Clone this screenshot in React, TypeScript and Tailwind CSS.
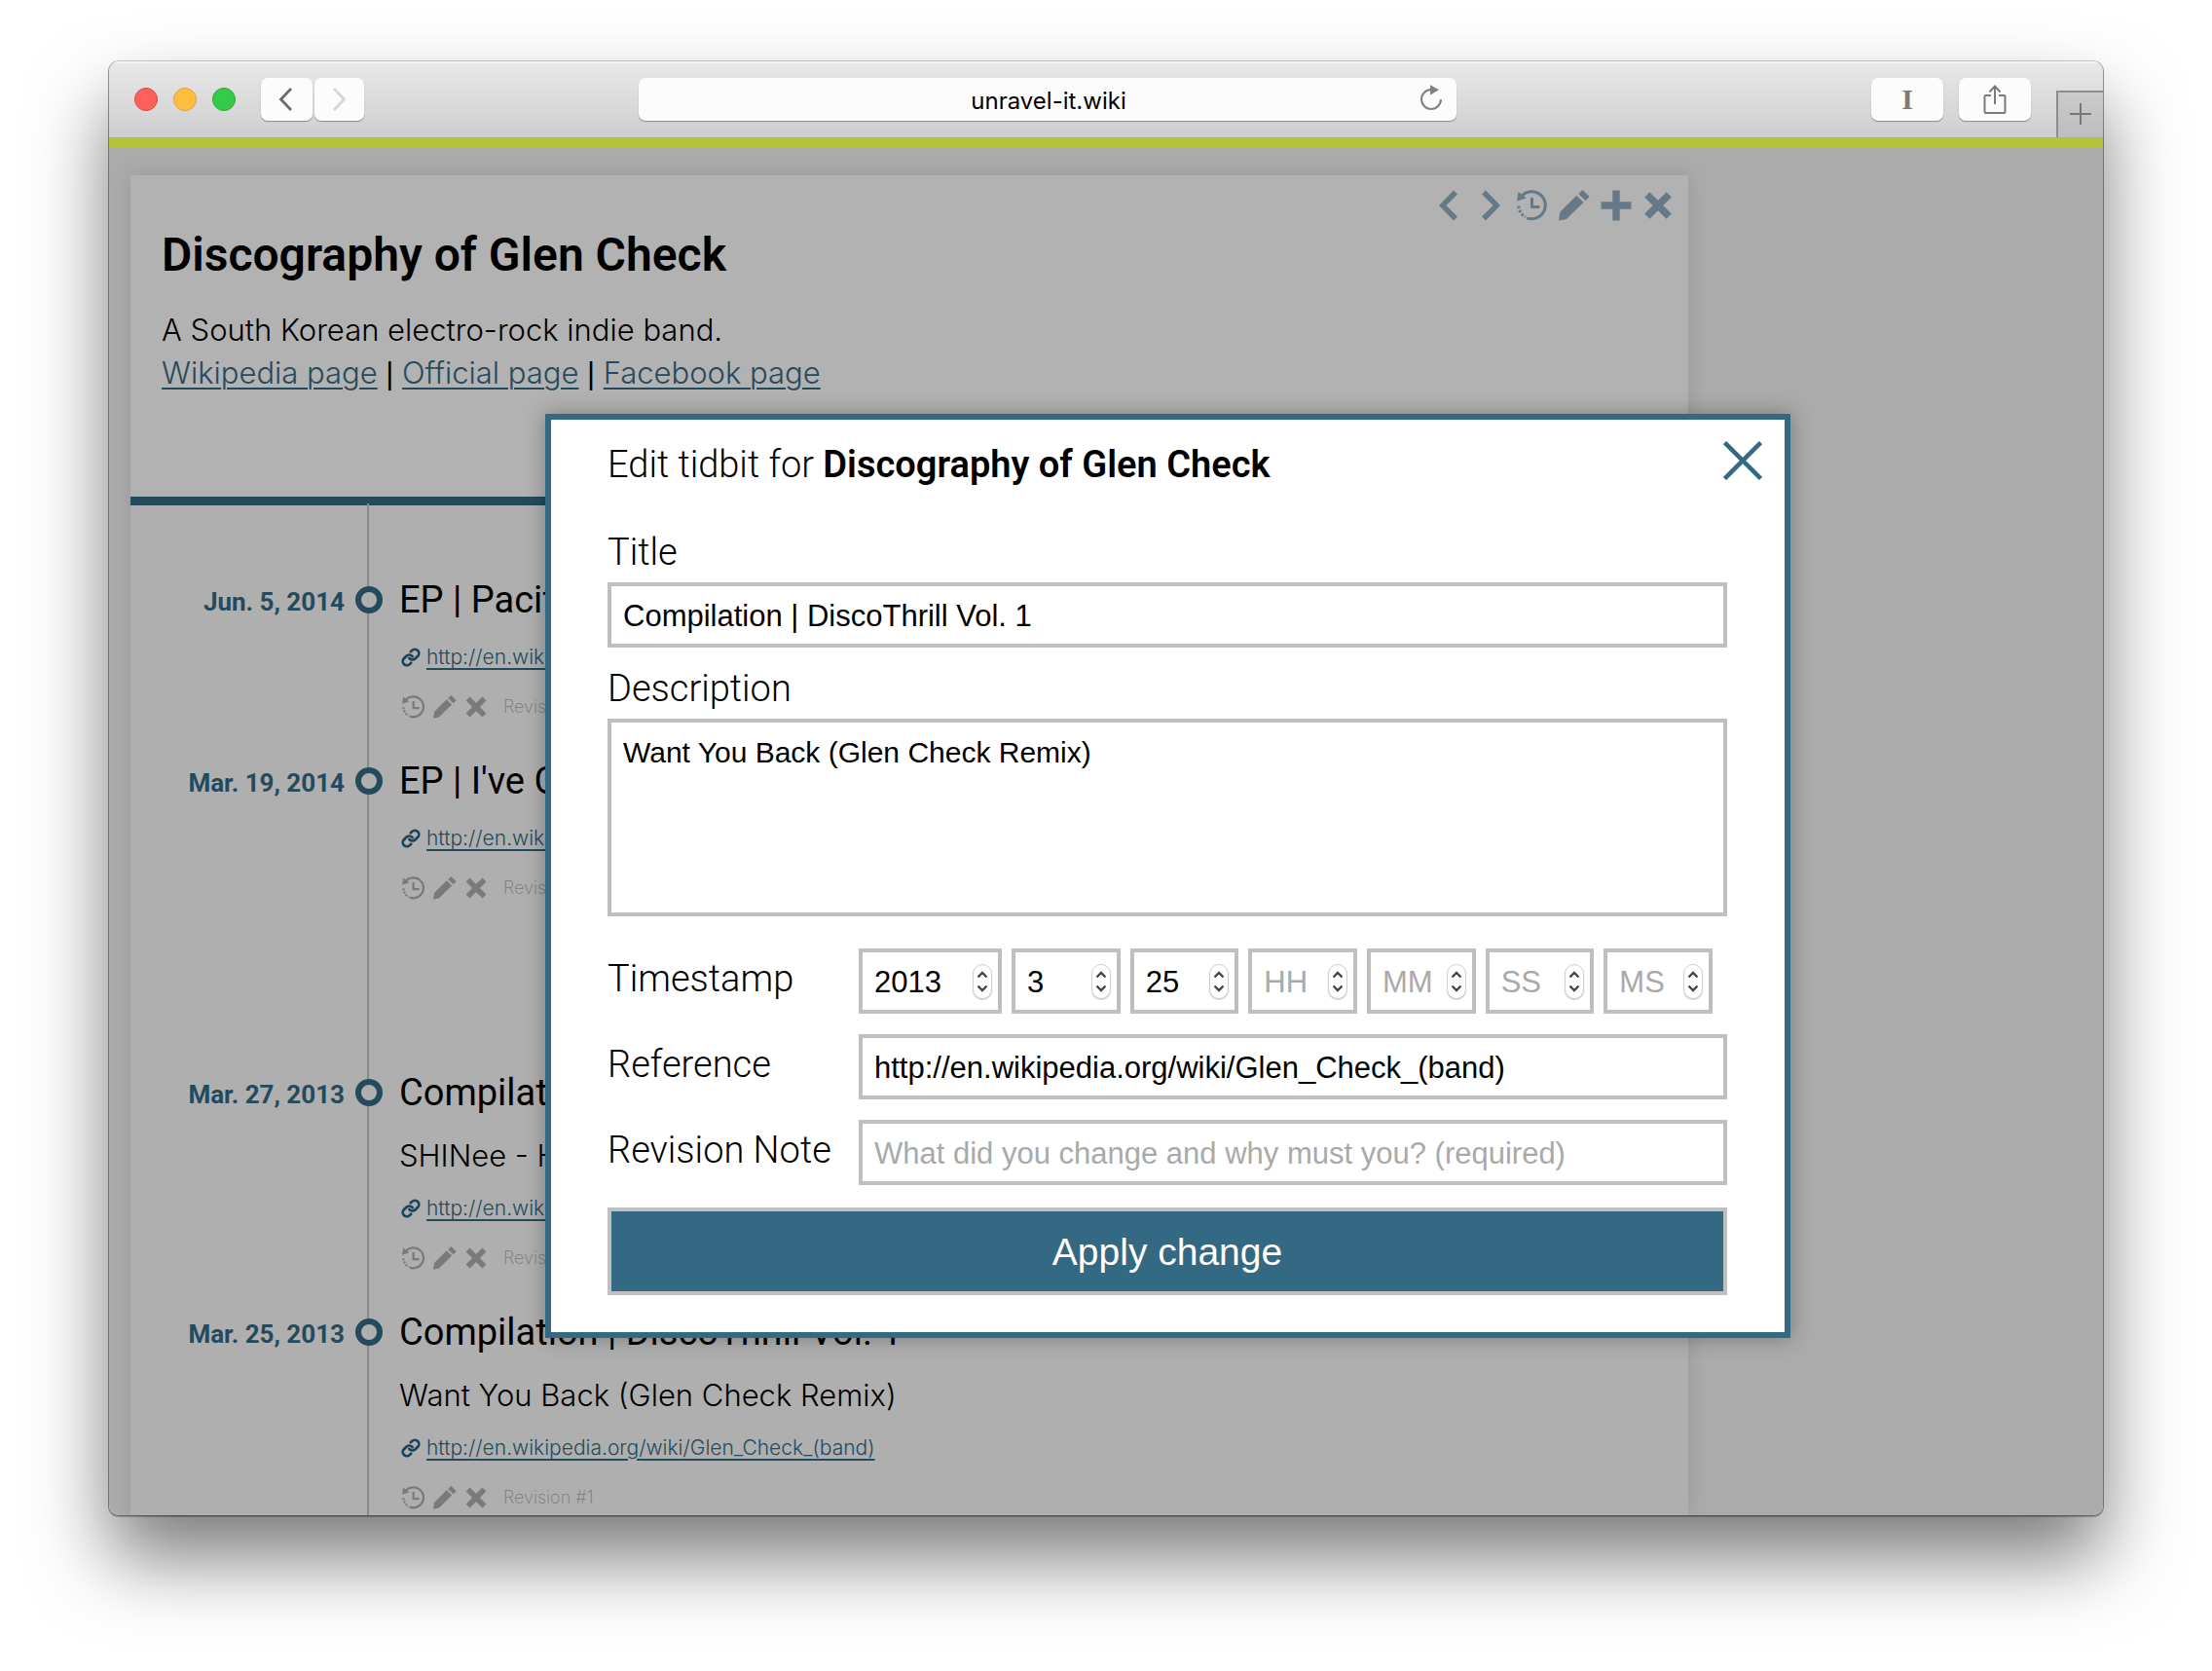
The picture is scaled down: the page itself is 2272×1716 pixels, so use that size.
import { useState, type ReactNode } from "react";
import { Link } from "lucide-react";

const HELVETICA = "font-['Liberation_Sans',Arial,sans-serif]";
const LIGHT = "font-['Inter','Liberation_Sans',sans-serif] font-light";
const WIKI_URL = "http://en.wikipedia.org/wiki/Glen_Check_(band)";

/* ---------- Icons ---------- */

function HistoryIcon({ className }: { className: string }) {
  return (
    <svg viewBox="0 0 32 32" className={className} fill="none" stroke="currentColor" aria-hidden="true">
      <path d="M5.4 5.8A14 14 0 1 1 10.3 28.8" strokeWidth="3" />
      <path d="M1.8 16.4A14 14 0 0 0 9 28" strokeWidth="3" strokeDasharray="2.6 1.8" />
      <path d="M1.5 2L0 11.5L9.8 8.6Z" fill="currentColor" stroke="none" />
      <path d="M15.5 8V17.5H23.5" strokeWidth="3" />
    </svg>
  );
}

function PencilIcon({ className }: { className: string }) {
  return (
    <svg viewBox="0 0 32 32" className={className} fill="currentColor" aria-hidden="true">
      <path d="M0 31.5L1.3 22.7L18.3 5.7L25.5 12.7L7.9 30Z" />
      <path d="M20.3 4.1L24.5 0L31.6 7L27.4 11Z" />
    </svg>
  );
}

function CrossIcon({ className }: { className: string }) {
  return (
    <svg viewBox="0 0 32 32" className={className} stroke="currentColor" strokeWidth="7.5" aria-hidden="true">
      <path d="M4.8 4.8L27.2 27.2M27.2 4.8L4.8 27.2" />
    </svg>
  );
}

function PlusIcon({ className }: { className: string }) {
  return (
    <svg viewBox="0 0 32 32" className={className} stroke="currentColor" strokeWidth="7.4" aria-hidden="true">
      <path d="M0.5 16H31.5M16 0.5V31.5" />
    </svg>
  );
}

function AngleIcon({ className }: { className: string }) {
  return (
    <svg viewBox="0 0 32 32" className={className} fill="currentColor" aria-hidden="true">
      <path d="M6 16L21 0.5L25 4.5L13.4 16L25 27.5L21 31.5Z" />
    </svg>
  );
}

function IconButton({ label, children }: { label: string; children: ReactNode }) {
  return (
    <button type="button" aria-label={label} className="block">
      {children}
    </button>
  );
}

/* ---------- Browser chrome ---------- */

const chromeButton =
  "flex h-11 items-center justify-center rounded-[7px] bg-[#fcfcfc] text-[#7a7a7a] shadow-[0_1px_1px_rgba(0,0,0,0.35)]";

function Toolbar() {
  return (
    <header className="flex h-[79px] shrink-0 items-center border-b border-[#a9a9a9] bg-linear-to-b from-[#e9e9e9] to-[#cecece] shadow-[inset_0_2px_0_#f3f3f3]">
      <div className="flex w-[544px] shrink-0 items-center pl-[26px]">
        <div className="flex gap-4">
          <button type="button" aria-label="Close window" className="size-6 rounded-full border border-[#e0443e] bg-[#fd615c]" />
          <button type="button" aria-label="Minimize window" className="size-6 rounded-full border border-[#dea034] bg-[#fdbd40]" />
          <button type="button" aria-label="Zoom window" className="size-6 rounded-full border border-[#27aa35] bg-[#34ca4a]" />
        </div>
        <div className="ml-[26px] flex gap-[2px]">
          <button type="button" aria-label="Back" className={`${chromeButton} w-[53px] pr-1`}>
            <svg viewBox="0 0 14 24" className="h-6 w-[14px]" fill="none" stroke="#6b6b6b" strokeWidth="2.8">
              <path d="M13 1L2.5 12L13 23" />
            </svg>
          </button>
          <button type="button" aria-label="Forward" className={`${chromeButton} w-[51px]`}>
            <svg viewBox="0 0 14 24" className="h-6 w-[14px]" fill="none" stroke="#d6d6d6" strokeWidth="2.8">
              <path d="M1 1L11.5 12L1 23" />
            </svg>
          </button>
        </div>
      </div>

      <div className="relative min-w-0 flex-1">
        <input
          aria-label="Address"
          defaultValue="unravel-it.wiki"
          className="block h-11 w-full rounded-[7px] bg-[#fcfcfc] pt-0.5 pl-0.5 text-center font-['Inter',sans-serif] text-2xl text-black shadow-[0_1px_1px_rgba(0,0,0,0.35)] outline-none"
        />
        <button type="button" aria-label="Reload" className="absolute top-1.5 right-3">
          <svg viewBox="0 0 28 32" className="h-8 w-7" fill="none" stroke="#808080" strokeWidth="2">
            <path d="M24 16A10 10 0 1 1 14 6" />
            <path d="M13 1.2L22 6.2L13 11.4Z" fill="#808080" stroke="none" />
          </svg>
        </button>
      </div>

      <div className="flex w-[664px] shrink-0 items-center justify-end self-stretch">
        <button type="button" aria-label="Text tool" className={`${chromeButton} w-[74px] pb-0.5 font-['Liberation_Serif',serif] text-[30px] font-bold`}>
          I
        </button>
        <button type="button" aria-label="Share" className={`${chromeButton} ml-4 w-[74px]`}>
          <svg viewBox="0 0 24 32" className="h-8 w-6" fill="none" stroke="currentColor" strokeWidth="2">
            <path d="M8 12H2.5Q1.5 12 1.5 13V29Q1.5 30 2.5 30H21.5Q22.5 30 22.5 29V13Q22.5 12 21.5 12H16" />
            <path d="M12 21V3M6.5 8.5L12 2.5L17.5 8.5" />
          </svg>
        </button>
        <button
          type="button"
          aria-label="New tab"
          className="ml-[26px] flex h-12 w-12 items-center justify-center self-end border-t-2 border-l-2 border-[#8d8d8d] bg-linear-to-b from-[#cbcbcb] to-[#bdbdbd] pb-0.5"
        >
          <svg viewBox="0 0 22 22" className="size-[22px]" stroke="#777" strokeWidth="2">
            <path d="M0 11H22M11 0V22" />
          </svg>
        </button>
      </div>
    </header>
  );
}

/* ---------- Wiki page ---------- */

type Entry = { date: string; title: string; text?: string; lateGap?: boolean };

const entries: Entry[] = [
  { date: "Jun. 5, 2014", title: "EP | Pacific" },
  { date: "Mar. 19, 2014", title: "EP | I've Got This Feeling" },
  { date: "Mar. 27, 2013", title: "Compilation | The Misconceptions", text: "SHINee - Hitchhiking", lateGap: true },
  { date: "Mar. 25, 2013", title: "Compilation | DiscoThrill Vol. 1", text: "Want You Back (Glen Check Remix)" },
];

function TimelineEntry({ entry }: { entry: Entry }) {
  return (
    <li className={`flex items-start ${entry.lateGap ? "mt-[134px]" : ""}`}>
      <time className="w-[220px] shrink-0 text-right text-[26px] leading-[50px] font-bold text-[#366b85]">{entry.date}</time>
      <span className="mt-[9px] ml-[11px] size-7 shrink-0 rounded-full border-6 border-[#366b85] bg-[#fbfbfb]" />
      <div className="ml-[17px] min-w-0">
        <h2 className="text-[38px] leading-[46px] whitespace-nowrap text-black">{entry.title}</h2>
        {entry.text && <p className={`${LIGHT} mt-6 text-[31px] leading-9 whitespace-nowrap text-black`}>{entry.text}</p>}
        <div className="mt-5 flex h-8 items-center gap-[6px] pl-0.5 text-[#366b85]">
          <Link className="size-5 text-[#275f7d]" strokeWidth={3.2} aria-hidden="true" />
          <a href={WIKI_URL} className={`${LIGHT} text-[21px] leading-8 underline decoration-2 underline-offset-4`}>
            {WIKI_URL}
          </a>
        </div>
        <div className="mt-5 flex h-[30px] items-center text-[#afafaf]">
          <div className="flex gap-2 pl-[3px]">
            <IconButton label="History"><HistoryIcon className="size-6" /></IconButton>
            <IconButton label="Edit"><PencilIcon className="size-6" /></IconButton>
            <IconButton label="Delete"><CrossIcon className="size-6" /></IconButton>
          </div>
          <span className="ml-4 font-['Inter',sans-serif] text-lg leading-[30px] font-extralight">Revision #1</span>
        </div>
      </div>
    </li>
  );
}

function HeaderLink({ href, children }: { href: string; children: ReactNode }) {
  return (
    <a href={href} className="text-[#366b85] underline decoration-2 underline-offset-4">
      {children}
    </a>
  );
}

function Divider() {
  return <span className={`${HELVETICA} font-normal`}>{" | "}</span>;
}

function WikiPage() {
  return (
    <article className="relative mt-7 ml-[22px] flex w-[1600px] flex-1 flex-col bg-[#fbfbfb] font-['Roboto',sans-serif] shadow-[0_0_20px_rgba(0,0,0,0.12)]">
      <div className="absolute top-[15px] right-[15px] flex gap-[11px] text-[#92aec0]">
        <IconButton label="Previous"><AngleIcon className="size-8" /></IconButton>
        <IconButton label="Next"><AngleIcon className="size-8 rotate-180" /></IconButton>
        <IconButton label="History"><HistoryIcon className="size-8" /></IconButton>
        <IconButton label="Edit"><PencilIcon className="size-8" /></IconButton>
        <IconButton label="Add"><PlusIcon className="size-8" /></IconButton>
        <IconButton label="Delete"><CrossIcon className="size-8" /></IconButton>
      </div>

      <div className="border-b-9 border-[#366b85] bg-white px-8 pt-[54px] pb-[104px]">
        <h1 className="text-5xl leading-[56px] font-semibold text-black">Discography of Glen Check</h1>
        <div className={`${LIGHT} mt-[27px] text-[31px] leading-[44px] text-black`}>
          <p>A South Korean electro-rock indie band.</p>
          <p>
            <HeaderLink href="#wikipedia">Wikipedia page</HeaderLink>
            <Divider />
            <HeaderLink href="#official">Official page</HeaderLink>
            <Divider />
            <HeaderLink href="#facebook">Facebook page</HeaderLink>
          </p>
        </div>
      </div>

      <div className="relative flex-1 pt-[74px]">
        <div className="absolute -top-0.5 bottom-0 left-[243px] w-0.5 bg-[#c5c5c5]" />
        <ol className="relative flex flex-col gap-[38px]">
          {entries.map((entry) => (
            <TimelineEntry key={entry.date} entry={entry} />
          ))}
        </ol>
      </div>
    </article>
  );
}

/* ---------- Modal ---------- */

const field = `${HELVETICA} border-4 border-[#bfbfbf] bg-white text-black outline-none placeholder:text-[#a9a9a9]`;

function NumberField({ label, placeholder, initial, name }: { label: string; placeholder: string; initial: string; name: string }) {
  const [value, setValue] = useState(initial);
  const step = (by: number) => setValue((v) => String((Number(v) || 0) + by));
  return (
    <div className={`${field} flex h-[67px] items-center pr-1.5 pl-3`}>
      <input
        type="number"
        id={name}
        aria-label={label}
        placeholder={placeholder}
        value={value}
        onChange={(e) => setValue(e.target.value)}
        className="w-0 min-w-0 flex-1 [appearance:textfield] pt-0.5 text-[31px] outline-none placeholder:text-[#a9a9a9] [&::-webkit-inner-spin-button]:appearance-none"
      />
      <span className="flex h-9 w-5 shrink-0 flex-col items-center justify-center gap-1.5 rounded-full border border-[#d0d0d0] bg-white shadow-[0_1px_1px_rgba(0,0,0,0.2)]">
        <button type="button" aria-label={`Increase ${label}`} onClick={() => step(1)}>
          <svg viewBox="0 0 12 8" className="h-2 w-3" fill="none" stroke="#444" strokeWidth="2.4">
            <path d="M1.5 6.5L6 2L10.5 6.5" />
          </svg>
        </button>
        <button type="button" aria-label={`Decrease ${label}`} onClick={() => step(-1)}>
          <svg viewBox="0 0 12 8" className="h-2 w-3" fill="none" stroke="#444" strokeWidth="2.4">
            <path d="M1.5 1.5L6 6L10.5 1.5" />
          </svg>
        </button>
      </span>
    </div>
  );
}

const timeParts = [
  { name: "year", label: "Year", placeholder: "YYYY", initial: "2013" },
  { name: "month", label: "Month", placeholder: "MM", initial: "3" },
  { name: "day", label: "Day", placeholder: "DD", initial: "25" },
  { name: "hour", label: "Hour", placeholder: "HH", initial: "" },
  { name: "minute", label: "Minute", placeholder: "MM", initial: "" },
  { name: "second", label: "Second", placeholder: "SS", initial: "" },
  { name: "millisecond", label: "Millisecond", placeholder: "MS", initial: "" },
];

function FormRow({ label, htmlFor, children }: { label: string; htmlFor: string; children: ReactNode }) {
  return (
    <div className="flex items-start">
      <label htmlFor={htmlFor} className="mt-2 block w-[258px] shrink-0">
        {label}
      </label>
      {children}
    </div>
  );
}

const textField = `${field} h-[67px] px-3 pt-0.5 text-[31px] font-normal`;

function EditModal() {
  return (
    <section
      role="dialog"
      aria-labelledby="modal-title"
      className="absolute top-[273px] left-[448px] w-[1279px] border-6 border-[#336982] bg-white pt-[23px] pr-[59px] pb-[38px] pl-[58px] shadow-[0_0_20px_rgba(0,0,0,0.3)]"
    >
      <button type="button" aria-label="Close" className="absolute top-[22px] right-[23px]">
        <svg viewBox="0 0 40 40" className="size-10" stroke="#336982" strokeWidth="4.5">
          <path d="M1.5 1.5L38.5 38.5M38.5 1.5L1.5 38.5" />
        </svg>
      </button>
      <form
        className="font-['Roboto',sans-serif] text-[38px] leading-[46px] font-light text-black"
        onSubmit={(e) => e.preventDefault()}
      >
        <h2 id="modal-title">
          Edit tidbit for <strong className="font-semibold">Discography of Glen Check</strong>
        </h2>

        <label htmlFor="title" className="mt-11 block">Title</label>
        <input id="title" defaultValue="Compilation | DiscoThrill Vol. 1" className={`${textField} mt-2 block w-full`} />

        <label htmlFor="description" className="mt-[19px] block">Description</label>
        <textarea
          id="description"
          defaultValue="Want You Back (Glen Check Remix)"
          className={`${field} mt-2 block h-[203px] w-full resize-none px-3 pt-[13px] text-[30px] leading-9 font-normal`}
        />

        <div className="mt-[33px] flex flex-col gap-[21px]">
          <FormRow label="Timestamp" htmlFor="year">
            <div className="grid w-[877px] grid-cols-[147px_repeat(6,minmax(0,1fr))] gap-[10px] font-normal">
              {timeParts.map((part) => (
                <NumberField key={part.name} {...part} />
              ))}
            </div>
          </FormRow>
          <FormRow label="Reference" htmlFor="reference">
            <input id="reference" defaultValue={WIKI_URL} className={`${textField} min-w-0 flex-1`} />
          </FormRow>
          <FormRow label="Revision Note" htmlFor="note">
            <input
              id="note"
              placeholder="What did you change and why must you? (required)"
              className={`${textField} min-w-0 flex-1`}
            />
          </FormRow>
        </div>

        <button type="submit" className={`${HELVETICA} mt-[23px] block h-[90px] w-full border-4 border-[#bfbfbf] bg-[#336982] pt-0.5 text-[39px] font-normal text-white`}>
          Apply change
        </button>
      </form>
    </section>
  );
}

export default function App() {
  return (
    <div className="flex h-screen flex-col bg-white px-28 pt-[63px] pb-40">
      <div className="flex min-h-0 flex-1 flex-col rounded-[10px] shadow-[0_0_0_1px_rgba(0,0,0,0.2),0_1px_0_1px_rgba(0,0,0,0.25),0_44px_80px_rgba(0,0,0,0.52)]">
        <div className="flex min-h-0 flex-1 flex-col overflow-hidden rounded-[10px]">
          <Toolbar />
          <div className="h-[10px] shrink-0 bg-[#b7c43a]" />
          <main className="relative flex min-h-0 flex-1 flex-col overflow-hidden bg-[#f5f5f5]">
            <WikiPage />
            <div className="absolute inset-0 bg-black/30" />
            <EditModal />
          </main>
        </div>
      </div>
    </div>
  );
}
